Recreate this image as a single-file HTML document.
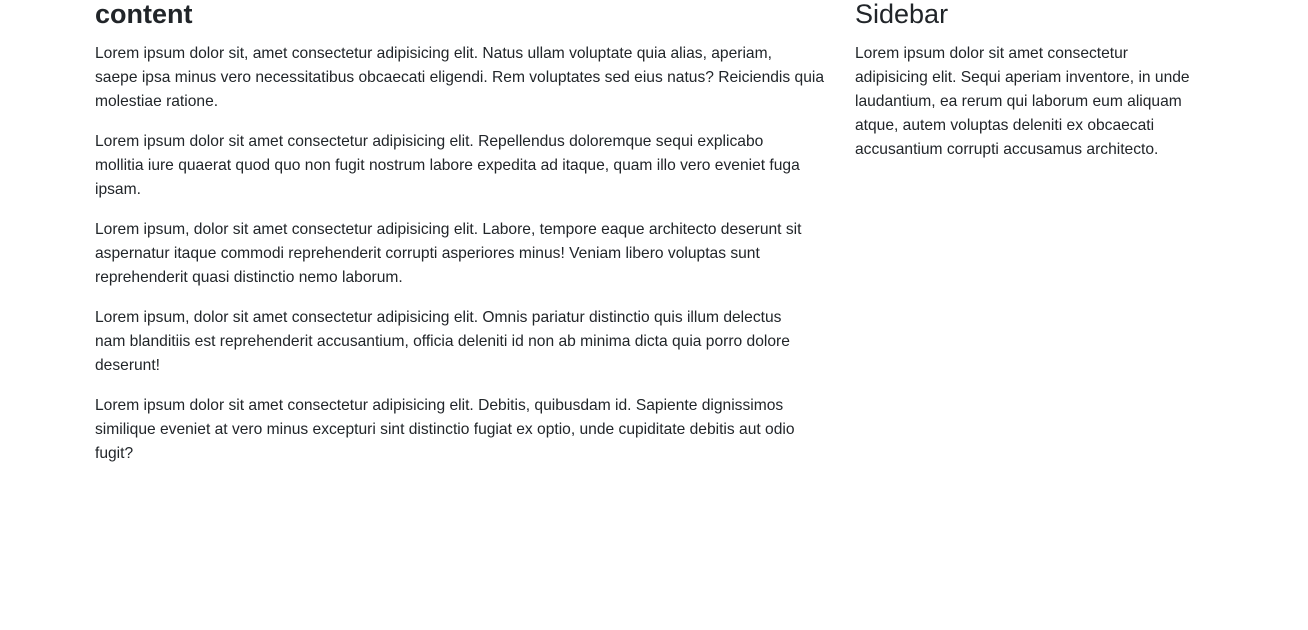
<!DOCTYPE html>
<html><head><meta charset="utf-8"><style>
body{margin:0;background:#fff;color:#212529;font-family:"Liberation Sans",Arial,sans-serif;}
.wrap{position:relative;width:1308px;height:630px;overflow:hidden;}
.col{position:absolute;top:-5px;}
h2{font-size:27px;font-weight:bold;line-height:38px;margin:0 0 9px;}
h2.s{font-weight:normal;}
p{font-size:15.6px;line-height:24px;margin:0 0 16px;white-space:nowrap;}
</style></head><body><div class="wrap">
<div class="col" style="left:95px;width:740px">
<h2>content</h2>
<p>Lorem ipsum dolor sit, amet consectetur adipisicing elit. Natus ullam voluptate quia alias, aperiam,<br>saepe ipsa minus vero necessitatibus obcaecati eligendi. Rem voluptates sed eius natus? Reiciendis quia<br>molestiae ratione.</p>
<p>Lorem ipsum dolor sit amet consectetur adipisicing elit. Repellendus doloremque sequi explicabo<br>mollitia iure quaerat quod quo non fugit nostrum labore expedita ad itaque, quam illo vero eveniet fuga<br>ipsam.</p>
<p>Lorem ipsum, dolor sit amet consectetur adipisicing elit. Labore, tempore eaque architecto deserunt sit<br>aspernatur itaque commodi reprehenderit corrupti asperiores minus! Veniam libero voluptas sunt<br>reprehenderit quasi distinctio nemo laborum.</p>
<p>Lorem ipsum, dolor sit amet consectetur adipisicing elit. Omnis pariatur distinctio quis illum delectus<br>nam blanditiis est reprehenderit accusantium, officia deleniti id non ab minima dicta quia porro dolore<br>deserunt!</p>
<p>Lorem ipsum dolor sit amet consectetur adipisicing elit. Debitis, quibusdam id. Sapiente dignissimos<br>similique eveniet at vero minus excepturi sint distinctio fugiat ex optio, unde cupiditate debitis aut odio<br>fugit?</p>
</div>
<div class="col" style="left:855px;width:360px">
<h2 class="s">Sidebar</h2>
<p>Lorem ipsum dolor sit amet consectetur<br>adipisicing elit. Sequi aperiam inventore, in unde<br>laudantium, ea rerum qui laborum eum aliquam<br>atque, autem voluptas deleniti ex obcaecati<br>accusantium corrupti accusamus architecto.</p>
</div>
</div></body></html>
